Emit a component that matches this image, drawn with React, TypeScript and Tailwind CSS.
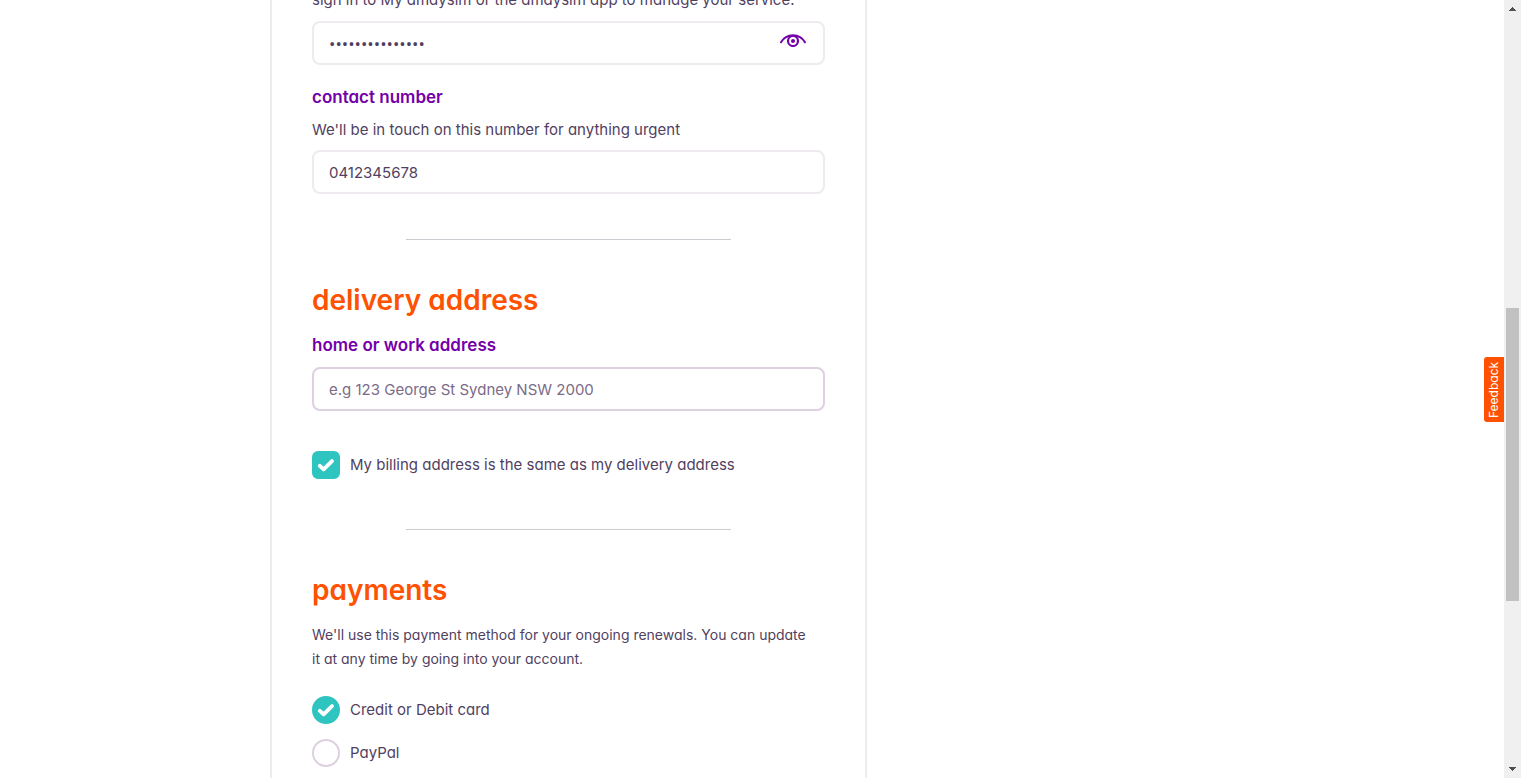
import { useState } from 'react';
import type { ReactNode } from 'react';

const fieldBase =
  'block h-11 w-full rounded-lg border-2 bg-white px-[15px] text-[#513f5f] outline-none placeholder:text-[#7b6b88]';

function Tick() {
  return (
    <svg
      viewBox="0 0 28 28"
      className="pointer-events-none col-start-1 row-start-1 hidden size-7 peer-checked:block"
      aria-hidden="true"
    >
      <path
        d="M7.8 14.9 11.6 18.3 20 10.1"
        fill="none"
        stroke="#fff"
        strokeWidth="3.9"
        strokeLinecap="round"
        strokeLinejoin="round"
      />
    </svg>
  );
}

function EyeIcon() {
  return (
    <svg viewBox="0 0 28 14" className="h-3.5 w-7" fill="none" stroke="#7300a8" aria-hidden="true">
      <path d="M2 9.3C4.6 4.8 9 2.3 14 2.3s9.4 2.5 12 7" strokeWidth="2" strokeLinecap="round" />
      <circle cx="14" cy="8" r="5" strokeWidth="2.2" />
      <circle cx="14" cy="8" r="2" fill="#7300a8" stroke="none" />
    </svg>
  );
}

function Title({ children }: { children: ReactNode }) {
  return <h2 className="mt-[42px] text-[28px] leading-9 font-semibold text-[#ff5200]">{children}</h2>;
}

function Divider() {
  return <hr className="mx-auto w-[325px] max-w-full border-[#cfcad2]" />;
}

function PaymentOption({
  id,
  label,
  checked,
  onSelect,
}: {
  id: string;
  label: string;
  checked: boolean;
  onSelect: () => void;
}) {
  return (
    <div className="flex items-center gap-2.5">
      <span className="grid size-7 shrink-0">
        <input
          id={id}
          type="radio"
          name="payment"
          checked={checked}
          onChange={onSelect}
          className="peer col-start-1 row-start-1 size-7 appearance-none rounded-full border-2 border-[#ddd0e0] bg-white checked:border-[#2ec4c0] checked:bg-[#2ec4c0]"
        />
        <Tick />
      </span>
      <label htmlFor={id}>{label}</label>
    </div>
  );
}

function ScrollTrack() {
  return (
    <div className="flex w-[17px] shrink-0 flex-col items-center justify-between bg-[#f0f0f0]" aria-hidden="true">
      <svg viewBox="0 0 17 17" className="size-[17px]" fill="#505050" shapeRendering="crispEdges">
        <path d="M5 10h7v1H5zM6 9h5v1H6zM7 8h3v1H7zM8 7h1v1H8z" />
      </svg>
      <div className="flex w-full grow flex-col px-0.5">
        <div className="grow-[291]" />
        <div className="grow-[293] bg-[#c1c1c1]" />
        <div className="grow-[160]" />
      </div>
      <svg viewBox="0 0 17 17" className="size-[17px]" fill="#505050" shapeRendering="crispEdges">
        <path d="M5 6h7v1H5zM6 7h5v1H6zM7 8h3v1H7zM8 9h1v1H8z" />
      </svg>
    </div>
  );
}

export default function App() {
  const [showPassword, setShowPassword] = useState(false);
  const [sameBilling, setSameBilling] = useState(true);
  const [method, setMethod] = useState('card');

  return (
    <div className="relative flex h-screen overflow-hidden bg-white font-['Inter','Liberation_Sans',sans-serif] text-[15px] leading-6 text-[#513f5f] [font-feature-settings:'cv11']">
      <main className="min-w-0 grow overflow-hidden">
        <div className="mx-auto max-w-[964px]">
          <form className="w-full max-w-[597px] border-x-2 border-[#eeeaf0] px-10 pb-10">
            <p id="password-hint" className="-mt-3">
              sign in to My amaysim or the amaysim app to manage your service.
            </p>
            <div className="relative mt-[9px]">
              <input
                type={showPassword ? 'text' : 'password'}
                aria-label="password"
                aria-describedby="password-hint"
                defaultValue="amaysimpassword"
                className={`${fieldBase} border-[#eeeaf0] font-['Open_Sans','Liberation_Sans',sans-serif] text-[17px]`}
              />
              <button
                type="button"
                aria-label="show password"
                onClick={() => setShowPassword(!showPassword)}
                className="absolute top-3 right-[18px]"
              >
                <EyeIcon />
              </button>
            </div>

            <label htmlFor="contact" className="mt-5 block text-[17px] font-semibold text-[#7300a8]">
              contact number
            </label>
            <p className="mt-[9px]">We'll be in touch on this number for anything urgent</p>
            <input
              id="contact"
              type="tel"
              defaultValue="0412345678"
              className={`${fieldBase} mt-2 mb-[45px] border-[#eeeaf0] text-[15px]`}
            />

            <Divider />

            <Title>delivery address</Title>
            <label htmlFor="address" className="mt-[15px] block text-[17px] font-semibold text-[#7300a8]">
              home or work address
            </label>
            <input
              id="address"
              type="text"
              placeholder="e.g 123 George St Sydney NSW 2000"
              className={`${fieldBase} mt-2.5 border-[#ddd0e0] text-[15px]`}
            />
            <div className="mt-10 mb-[50px] flex items-center gap-2.5">
              <span className="grid size-7 shrink-0">
                <input
                  id="billing"
                  type="checkbox"
                  checked={sameBilling}
                  onChange={() => setSameBilling(!sameBilling)}
                  className="peer col-start-1 row-start-1 size-7 appearance-none rounded-md border-2 border-[#ddd0e0] bg-white checked:border-[#2ec4c0] checked:bg-[#2ec4c0]"
                />
                <Tick />
              </span>
              <label htmlFor="billing">My billing address is the same as my delivery address</label>
            </div>

            <Divider />

            <Title>payments</Title>
            <p className="mt-[15px] text-[14px] leading-6">
              We'll use this payment method for your ongoing renewals. You can update
              <br />
              it at any time by going into your account.
            </p>
            <div className="mt-[25px] flex flex-col gap-[15px]">
              <PaymentOption
                id="pay-card"
                label="Credit or Debit card"
                checked={method === 'card'}
                onSelect={() => setMethod('card')}
              />
              <PaymentOption
                id="pay-paypal"
                label="PayPal"
                checked={method === 'paypal'}
                onSelect={() => setMethod('paypal')}
              />
            </div>
          </form>
        </div>
      </main>

      <button
        type="button"
        className="absolute top-[357px] right-[17px] flex h-[65px] w-5 rotate-180 items-center justify-center rounded-r-[3px] bg-[#ff5200] text-[12px] leading-5 text-white [writing-mode:vertical-rl]"
      >
        Feedback
      </button>
      <ScrollTrack />
    </div>
  );
}
